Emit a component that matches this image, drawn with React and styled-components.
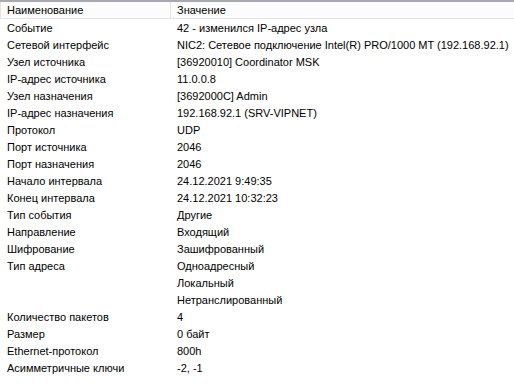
import React from "react";
import styled, { createGlobalStyle } from "styled-components";

const rows = [
  ["Событие", "42 - изменился IP-адрес узла"],
  ["Сетевой интерфейс", "NIC2: Сетевое подключение Intel(R) PRO/1000 MT (192.168.92.1)"],
  ["Узел источника", "[36920010] Coordinator MSK"],
  ["IP-адрес источника", "11.0.0.8"],
  ["Узел назначения", "[3692000C] Admin"],
  ["IP-адрес назначения", "192.168.92.1  (SRV-VIPNET)"],
  ["Протокол", "UDP"],
  ["Порт источника", "2046"],
  ["Порт назначения", "2046"],
  ["Начало интервала", "24.12.2021 9:49:35"],
  ["Конец интервала", "24.12.2021 10:32:23"],
  ["Тип события", "Другие"],
  ["Направление", "Входящий"],
  ["Шифрование", "Зашифрованный"],
  ["Тип адреса", "Одноадресный"],
  ["", "Локальный"],
  ["", "Нетранслированный"],
  ["Количество пакетов", "4"],
  ["Размер", "0 байт"],
  ["Ethernet-протокол", "800h"],
  ["Асимметричные ключи", "-2, -1"],
];

const GlobalStyle = createGlobalStyle`
  *, *::before, *::after {
    box-sizing: border-box;
  }
  html, body {
    margin: 0;
    padding: 0;
    background: #fff;
  }
  body {
    font-family: "Liberation Sans", Arial, sans-serif;
    font-size: 11px;
    color: #000;
  }
`;

function App() {
  return (
    <>
      <GlobalStyle />
      <ListView>
        <Header>
          <HeadCell $width={170}>Наименование</HeadCell>
          <HeadCell>Значение</HeadCell>
        </Header>
        {rows.map(([name, value], i) => (
          <Row key={i}>
            <Cell $width={170}>{name}</Cell>
            <Cell>{value}</Cell>
          </Row>
        ))}
      </ListView>
    </>
  );
}

const ListView = styled.div`
  width: 514px;
  height: 386px;
  overflow: hidden;
  background: #fff;
`;

const Header = styled.div`
  display: flex;
  height: 19px;
  border-top: 2px solid #a8a8b0;
  border-bottom: 1px solid #e5e5e5;
  background: #fcfcfc;
`;

const HeadCell = styled.div`
  flex: ${(p) => (p.$width ? `0 0 ${p.$width}px` : "1")};
  display: flex;
  align-items: center;
  padding-left: 6px;
  border-left: 1px solid #e5e5e5;
  white-space: nowrap;
`;

const Row = styled.div`
  display: flex;
  height: 17px;
  align-items: center;
`;

const Cell = styled.div`
  flex: ${(p) => (p.$width ? `0 0 ${p.$width}px` : "1")};
  padding-left: 7px;
  white-space: nowrap;
`;

export default App;
